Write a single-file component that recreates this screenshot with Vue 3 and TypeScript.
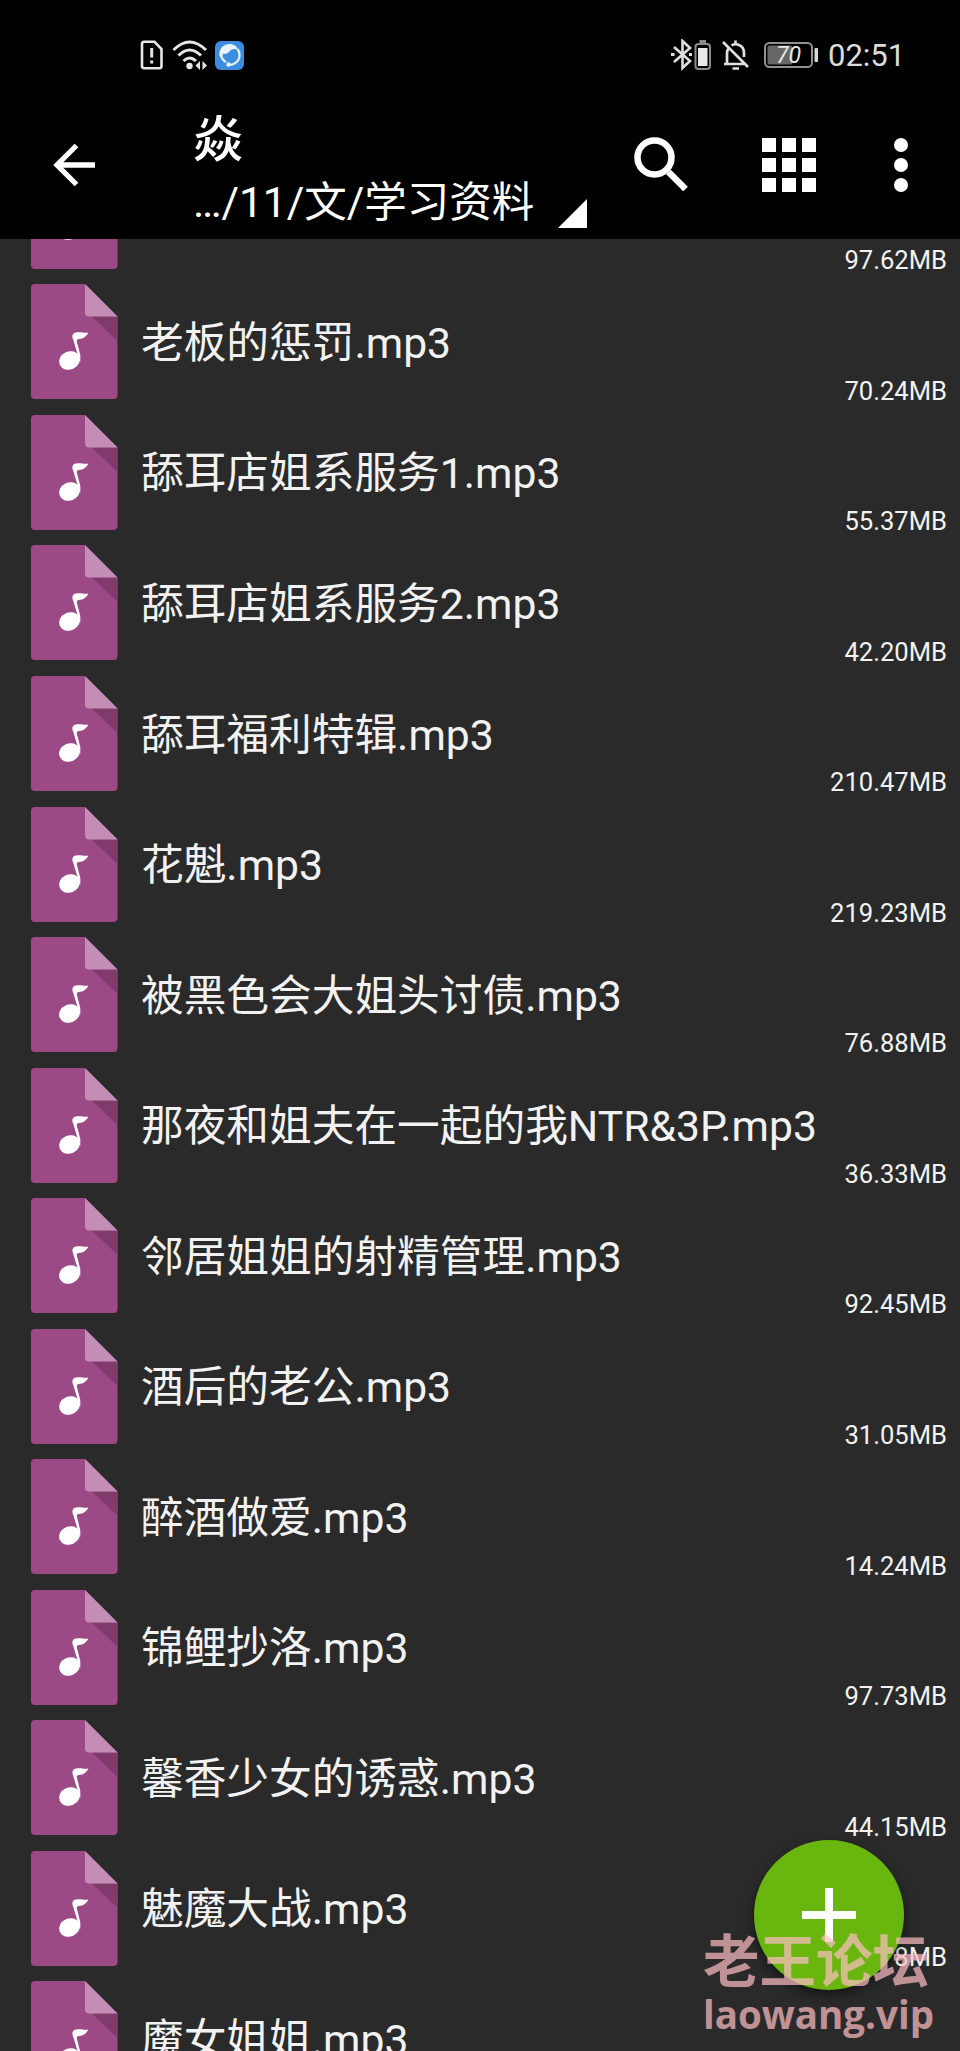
<script setup lang="ts">
interface AudioFile {
  name: string
  size: string
}

const files: AudioFile[] = [
  { name: '', size: '97.62MB' },
  { name: '老板的惩罚.mp3', size: '70.24MB' },
  { name: '舔耳店姐系服务1.mp3', size: '55.37MB' },
  { name: '舔耳店姐系服务2.mp3', size: '42.20MB' },
  { name: '舔耳福利特辑.mp3', size: '210.47MB' },
  { name: '花魁.mp3', size: '219.23MB' },
  { name: '被黑色会大姐头讨债.mp3', size: '76.88MB' },
  { name: '那夜和姐夫在一起的我NTR&3P.mp3', size: '36.33MB' },
  { name: '邻居姐姐的射精管理.mp3', size: '92.45MB' },
  { name: '酒后的老公.mp3', size: '31.05MB' },
  { name: '醉酒做爱.mp3', size: '14.24MB' },
  { name: '锦鲤抄洛.mp3', size: '97.73MB' },
  { name: '馨香少女的诱惑.mp3', size: '44.15MB' },
  { name: '魅魔大战.mp3', size: '8MB' },
  { name: '魔女姐姐.mp3', size: '' },
]
const gridCells = [0, 20, 40]
</script>

<template>
  <div class="screen">
    <header class="header">
      <div class="status">
        <div class="status-left">
          <svg width="24" height="30" viewBox="0 0 24 30" fill="none" stroke="#e6e6e6" stroke-width="2.6">
            <path d="M4 1.8H14.5L21.5 9V26Q21.5 28.2 19.3 28.2H4.2Q2 28.2 2 26V4Q2 1.8 4 1.8Z" />
            <path d="M11.7 8V17.5M11.7 20.5V23.5" stroke-width="3" />
          </svg>
          <svg class="wifi" width="37" height="31" viewBox="0 0 37 31" fill="none" stroke="#e6e6e6" stroke-width="3">
            <path d="M1.5 10Q17.5 -6 34 10M6.5 15.5Q17.5 4.5 29 15.5M11.5 21Q17.5 15 24 21" />
            <circle cx="17.5" cy="26" r="3.2" fill="#e6e6e6" stroke="none" />
            <path d="M28 21V30L23.500 25.500ZM30.500 21V30L35 25.500Z" fill="#e6e6e6" stroke="none" />
          </svg>
          <svg class="assistant" width="29" height="29" viewBox="0 0 29 29">
            <rect width="29" height="29" rx="6" fill="#3c8de0" />
            <path d="M4.500 15C3.500 7 9 3 14.500 3C19 3 22 5.500 23 9C19 7 16 8 14.500 10.500C12.500 13 10 13 8 12.500L7 17Z" fill="#e8f4ff" />
            <path d="M6 14Q7 19 11 21M22.500 8Q26 13 23.500 18.500Q21 23.500 14 24" fill="none" stroke="#e8f4ff" stroke-width="2.200" />
            <circle cx="13.500" cy="23.500" r="2.200" fill="#e8f4ff" />
          </svg>
        </div>
        <div class="status-right">
          <svg width="40" height="32" viewBox="0 0 40 32" fill="none">
            <path d="M3 8L19 22L11.500 29V2L19 9L3 23" stroke="#dedede" stroke-width="2.600" />
            <path d="M0 15.500H3.500M18 15.500H21" stroke="#dedede" stroke-width="3" />
            <rect x="24.500" y="5" width="14.500" height="25" rx="3" stroke="#8a8a8a" stroke-width="2" />
            <rect x="28.500" y="1" width="6.500" height="3" fill="#8a8a8a" />
            <rect x="27" y="9" width="9.500" height="18" fill="#e9e9e9" />
          </svg>
          <svg class="bell" width="28" height="32" viewBox="0 0 28 32" fill="none" stroke="#e0e0e0" stroke-width="2.700">
            <path d="M2 25H22M5 24V14Q5 11 7 9M9.500 6.500Q13 4 17 6Q22 8 22 14V18M13.500 5V1.500M1 3L26 28M10.500 29.500H17" />
          </svg>
          <svg class="battery" width="55" height="26" viewBox="0 0 55 26">
            <rect x="1" y="1" width="47" height="24" rx="4.500" fill="none" stroke="#919191" stroke-width="2" />
            <rect x="3.500" y="3.500" width="25" height="19" rx="2" fill="#666" />
            <rect x="50.500" y="6" width="3.500" height="14" rx="1" fill="#d8d8d8" />
            <text x="24.500" y="21" text-anchor="middle">70</text>
          </svg>
          <span class="clock">02:51</span>
        </div>
      </div>
      <div class="toolbar">
        <svg class="back" width="44" height="44" viewBox="0 0 44 44" fill="none" stroke="#fff" stroke-width="5.300">
          <path d="M43 22H5M24.500 2.500L5 22L24.500 41.500" />
        </svg>
        <div class="location">
          <div class="title">焱</div>
          <div class="path">…/11/文/学习资料</div>
        </div>
        <svg class="corner" width="29" height="29" viewBox="0 0 29 29"><path d="M29 0V29H0Z" fill="#fff" /></svg>
        <svg class="search" width="54" height="54" viewBox="0 0 54 54" fill="none" stroke="#fff">
          <circle cx="20.500" cy="20.500" r="17" stroke-width="6.500" />
          <path d="M34.500 35L51.500 52" stroke-width="6.500" />
        </svg>
        <svg class="grid" width="54" height="54" viewBox="0 0 54 54" fill="#fff">
          <template v-for="y in gridCells" :key="y">
            <rect v-for="x in gridCells" :key="x" :x="x" :y="y" width="14" height="14" />
          </template>
        </svg>
        <svg class="more" width="14" height="54" viewBox="0 0 14 54" fill="#fff">
          <circle v-for="y in gridCells" :key="y" cx="7" :cy="y + 7" r="7" />
        </svg>
      </div>
    </header>

    <main class="list">
      <div v-for="(file, i) in files" :key="i" class="row">
        <svg class="file-icon" width="87" height="115" viewBox="0 0 87 115">
          <path d="M4 0H54L86.500 32.500V111Q86.500 115 82.500 115H4Q0 115 0 111V4Q0 0 4 0Z" fill="#9b4a86" />
          <path d="M61 32.500H86.500V57Z" fill="#803a6c" />
          <path d="M54 0L86.500 32.500H58Q54 32.500 54 28.500Z" fill="#c48db5" />
          <ellipse cx="38.500" cy="76.500" rx="10.700" ry="9" transform="rotate(-24 38.500 76.500)" fill="#fff" />
          <path d="M49.300 78L46.500 70L42.300 56C40.500 52 41.500 49 45 48.500C50 47.500 53 49.500 57.500 48.500C55.500 52 53 54.500 49.500 54.800C46.500 55 45.500 55.500 45.800 57.500L49.300 71Z" fill="#fff" />
        </svg>
        <span class="name">{{ file.name }}</span>
        <span class="size">{{ file.size }}</span>
      </div>
    </main>

    <button class="fab" aria-label="+">
      <svg width="54" height="54" viewBox="0 0 54 54"><path d="M0 27H54M27 0V54" stroke="#fff" stroke-width="8" /></svg>
    </button>
    <div class="watermark">
      <div class="mark-name">老王论坛</div>
      <div class="mark-url">laowang.vip</div>
    </div>
  </div>
</template>

<style>
body {
  background: #2a2a2a;
}
</style>

<style scoped>
.screen {
  position: relative;
  width: 960px;
  height: 2051px;
  overflow: hidden;
  display: flex;
  flex-direction: column;
  background: #2a2a2a;
  color: #f2f2f2;
  font-family: Roboto, "Noto Sans CJK SC", sans-serif;
}
svg {
  display: block;
  flex: none;
}
.header {
  height: 239px;
  flex: none;
  background: #000;
}
.status {
  height: 110px;
  box-sizing: border-box;
  padding: 0 55px 0 140px;
  display: flex;
  justify-content: space-between;
  align-items: center;
}
.status-left,
.status-right {
  display: flex;
  align-items: center;
}
.wifi {
  margin-left: 8px;
}
.assistant {
  margin-left: 6px;
}
.bell {
  margin-left: 11px;
}
.battery {
  margin-left: 14px;
}
.battery text {
  font: italic 23px Roboto, sans-serif;
  fill: #e6e6e6;
}
.clock {
  width: 77px;
  margin-left: 9px;
  font-size: 31px;
  line-height: 36px;
  padding-top: 2px;
  color: #dcdcdc;
  white-space: nowrap;
}
.toolbar {
  height: 129px;
  display: flex;
  align-items: flex-start;
}
.back {
  margin: 33px 0 0 52px;
}
.location {
  width: 345px;
  margin-left: 97px;
  color: #fff;
  white-space: nowrap;
}
.title {
  height: 62px;
  font-size: 50px;
  line-height: 60px;
  font-weight: 500;
}
.path {
  font-size: 42.5px;
  line-height: 62px;
}
.corner {
  margin: 89px 0 0 20px;
}
.search {
  margin: 27px 0 0 47px;
}
.grid {
  margin: 28px 0 0 74px;
}
.more {
  margin: 28px 0 0 78px;
}
.list {
  flex: 1;
  min-height: 0;
  overflow: hidden;
}
.row {
  height: 130.55px;
  display: flex;
  align-items: flex-start;
  padding: 0 13px 0 31px;
}
.row:first-child {
  margin-top: -85.2px;
}
.name {
  margin-left: 23px;
  flex: 1;
  font-size: 42.7px;
  line-height: 60px;
  padding-top: 28.5px;
  white-space: nowrap;
}
.size {
  width: 0;
  display: flex;
  justify-content: flex-end;
  font-size: 25.6px;
  line-height: 30px;
  padding-top: 91.3px;
  white-space: nowrap;
}
.fab {
  position: absolute;
  left: 754px;
  top: 1840px;
  width: 150px;
  height: 150px;
  padding: 0;
  border: 0;
  border-radius: 50%;
  background: #68b60e;
  display: flex;
  align-items: center;
  justify-content: center;
  box-shadow: 0 5px 12px rgba(0, 0, 0, 0.5);
}
.watermark {
  position: absolute;
  left: 703px;
  top: 1922px;
  color: rgb(255, 190, 196);
  opacity: 0.7;
  font-weight: 700;
  white-space: nowrap;
}
.mark-name {
  font-family: "Noto Sans CJK SC", sans-serif;
  font-size: 56.5px;
  line-height: 70px;
}
.mark-url {
  font-family: "Open Sans", sans-serif;
  font-size: 38.5px;
  line-height: 44px;
}
</style>
